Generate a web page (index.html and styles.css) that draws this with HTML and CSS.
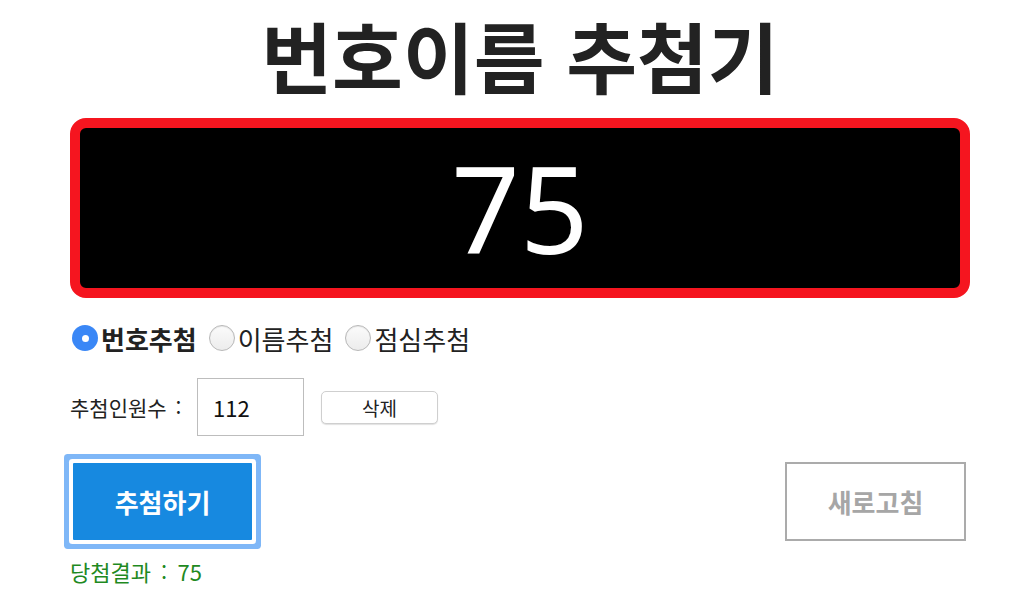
FILE: index.html
```html
<!DOCTYPE html>
<html lang="ko">
<head>
<meta charset="utf-8">
<title>번호이름 추첨기</title>
<link rel="stylesheet" href="styles.css">
</head>
<body>
<div class="wrap">
  <h1 class="title">번호이름 추첨기</h1>
  <div class="display"><span class="num">75</span></div>
  <div class="modes">
    <label class="mode active"><span class="radio checked"></span>번호추첨</label>
    <label class="mode"><span class="radio"></span>이름추첨</label>
    <label class="mode"><span class="radio"></span>점심추첨</label>
  </div>
  <div class="count-row">
    <span class="count-label">추첨인원수 :</span>
    <span class="count-input">112</span>
    <span class="del-btn">삭제</span>
  </div>
  <div class="actions">
    <span class="draw-btn">추첨하기</span>
    <span class="reset-btn">새로고침</span>
  </div>
  <div class="result">당첨결과 : 75</div>
</div>
</body>
</html>
```
FILE: styles.css
```css
html, body {
  margin: 0;
  padding: 0;
  background: #fff;
}
body {
  font-family: "Noto Sans CJK KR", "Noto Sans", sans-serif;
  color: #222;
}
.wrap {
  width: 900px;
  margin-left: 70px;
  display: flex;
  flex-direction: column;
}
.title {
  margin: 0;
  padding-top: 12px;
  height: 118px;
  box-sizing: border-box;
  font-size: 77px;
  line-height: 86px;
  font-weight: 700;
  text-align: center;
  color: #222;
}
.display {
  height: 180px;
  box-sizing: border-box;
  border: 10px solid #f5151f;
  border-radius: 16px;
  background: #000;
  display: flex;
  align-items: center;
  justify-content: center;
}
.num {
  font-family: "Noto Sans", sans-serif;
  color: #fff;
  font-size: 120px;
  line-height: 1;
}
.modes {
  display: flex;
  align-items: center;
  gap: 12px;
  margin-top: 25px;
  height: 30px;
  margin-left: 2px;
}
.mode {
  display: flex;
  align-items: center;
  font-size: 26px;
  color: #222;
}
.mode.active {
  font-weight: 700;
}
.radio {
  width: 26px;
  height: 26px;
  box-sizing: border-box;
  border-radius: 50%;
  border: 1px solid #b8b8b8;
  background: linear-gradient(#fbfbfb, #ececec);
  box-shadow: inset 0 1px 1px rgba(0,0,0,0.08);
  margin-right: 3px;
  position: relative;
}
.radio.checked {
  border: none;
  background: #3a87f6;
  box-shadow: none;
}
.radio.checked::after {
  content: "";
  position: absolute;
  left: 10px;
  top: 10px;
  width: 7px;
  height: 7px;
  border-radius: 50%;
  background: #fff;
}
.count-row {
  display: flex;
  align-items: center;
  margin-top: 25px;
  height: 58px;
}
.count-label {
  font-size: 21px;
  color: #222;
  width: 127px;
  word-spacing: 3px;
}
.count-input {
  width: 107px;
  height: 58px;
  box-sizing: border-box;
  border: 1px solid #bdbdbd;
  font-size: 22px;
  padding-left: 15px;
  display: flex;
  align-items: center;
  color: #111;
}
.del-btn {
  margin-left: 17px;
  width: 117px;
  height: 33px;
  box-sizing: border-box;
  border: 1px solid #cfcfcf;
  border-radius: 5px;
  box-shadow: 0 1px 1px rgba(0,0,0,0.12);
  background: #fff;
  font-size: 19px;
  display: flex;
  align-items: center;
  justify-content: center;
  color: #222;
}
.actions {
  display: flex;
  justify-content: space-between;
  align-items: center;
  margin-top: 25px;
  height: 80px;
}
.draw-btn {
  margin-left: 3px;
  width: 179px;
  height: 77px;
  background: #1789e0;
  color: #fff;
  font-size: 26px;
  font-weight: 700;
  display: flex;
  align-items: center;
  justify-content: center;
  border-radius: 1px;
  box-shadow: 0 0 0 4px #fff, 0 0 0 9px #7fb7f7;
}
.reset-btn {
  margin-right: 4px;
  width: 181px;
  height: 79px;
  box-sizing: border-box;
  border: 2px solid #ababab;
  color: #a6a6a6;
  font-size: 26px;
  font-weight: 700;
  display: flex;
  align-items: center;
  justify-content: center;
}
.result {
  margin-top: 16px;
  font-size: 22px;
  color: #1f8a1f;
  line-height: 28px;
  word-spacing: 4px;
}
```
